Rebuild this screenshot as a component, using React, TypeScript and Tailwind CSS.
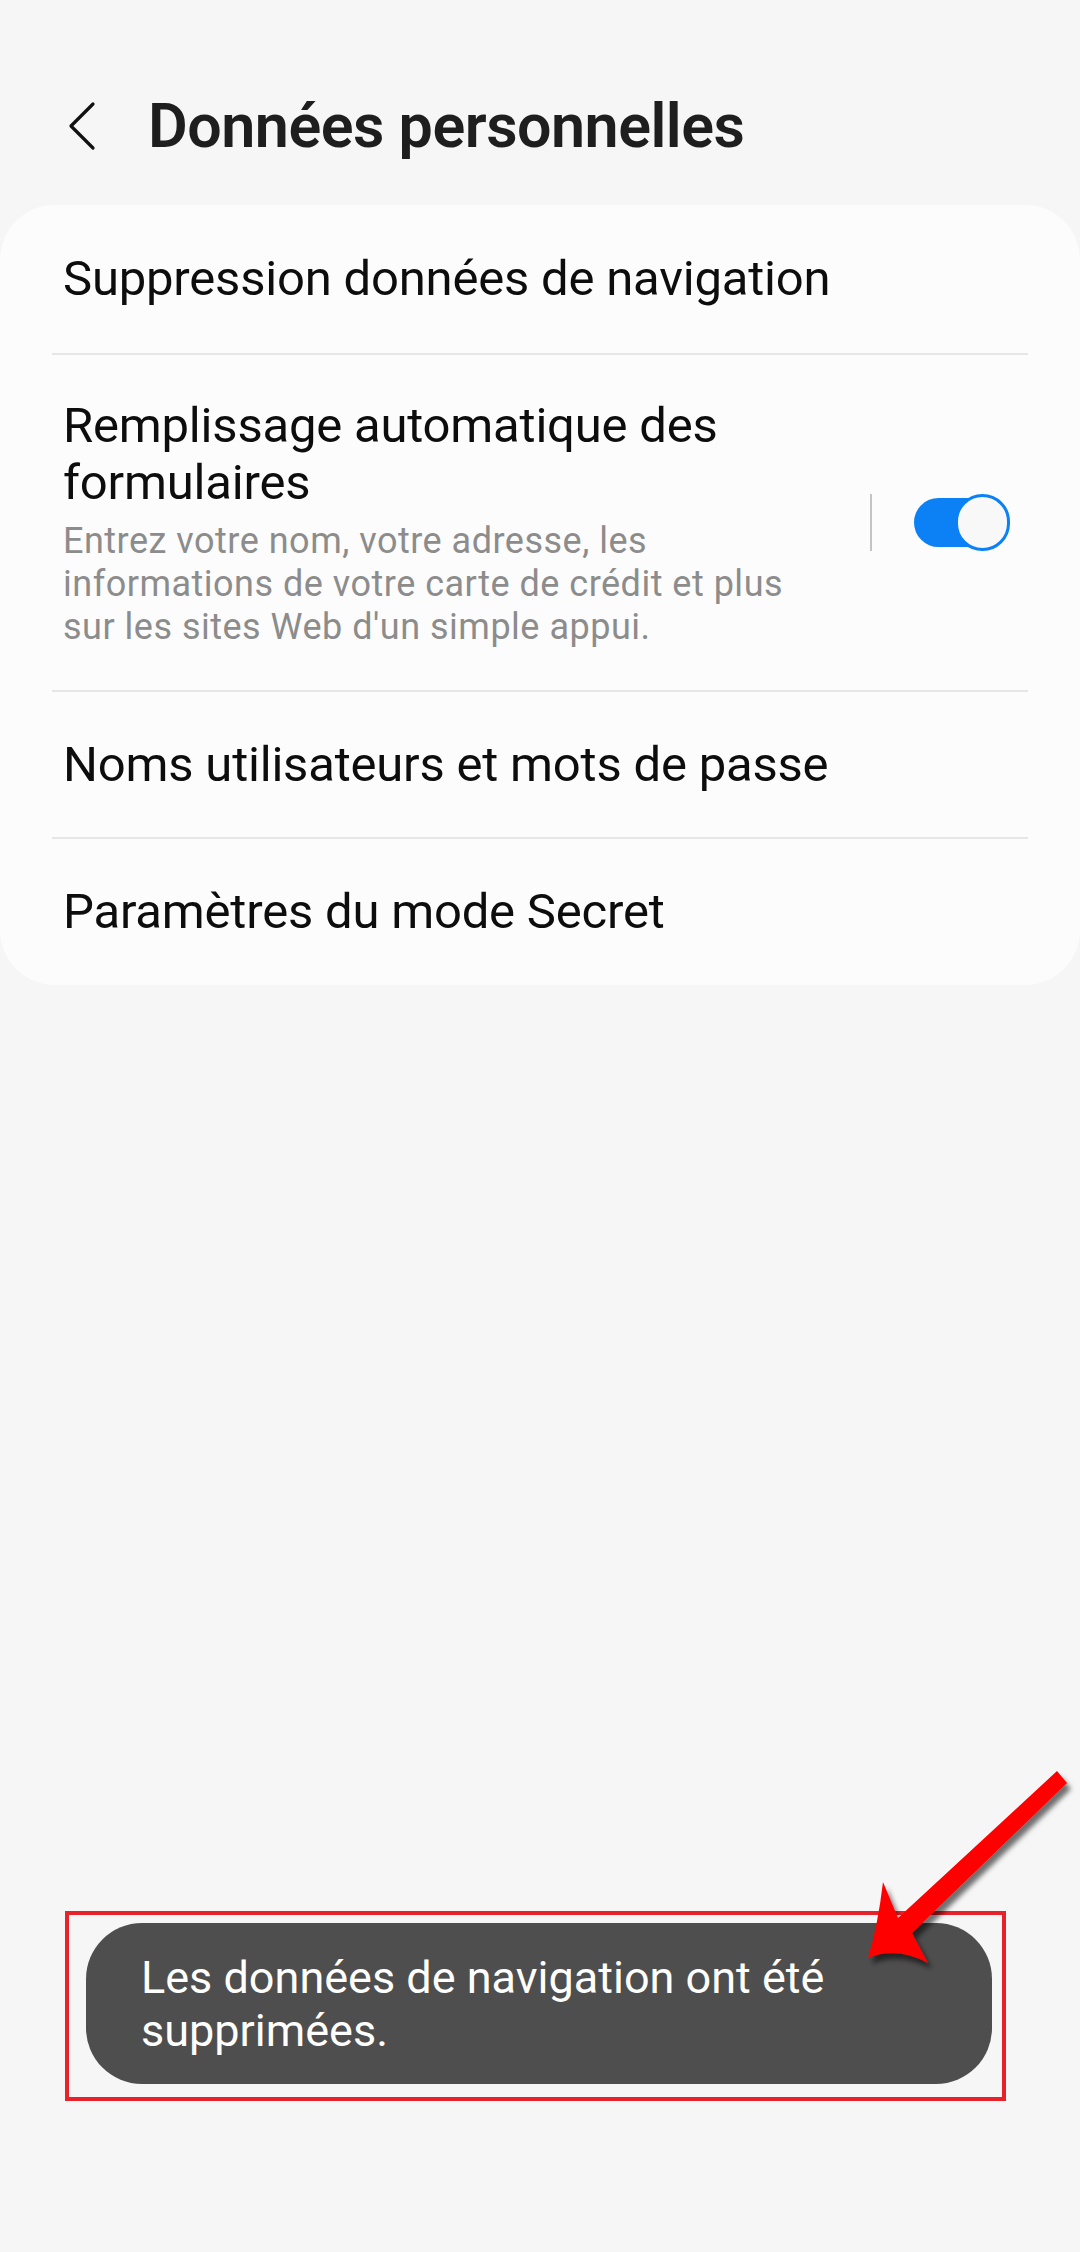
import React from "react";

function Divider() {
  return <div className="mx-[52px] h-[2px] bg-[#e6e6e6]" />;
}

function Toggle() {
  return (
    <div className="relative h-[57px] w-[96px]">
      <div className="absolute left-0 top-[4px] h-[49px] w-[90px] rounded-full bg-[#0b81f5]" />
      <div className="absolute right-0 top-0 h-[57px] w-[55px] rounded-full border-[3px] border-[#0b81f5] bg-[#f8f8f8]" />
    </div>
  );
}

function RedArrow() {
  return (
    <svg
      className="pointer-events-none absolute left-0 top-0"
      width="1080"
      height="2252"
      viewBox="0 0 1080 2252"
    >
      <defs>
        <filter id="arrowShadow" x="-20%" y="-20%" width="140%" height="140%">
          <feDropShadow dx="4" dy="6" stdDeviation="2.5" floodColor="#000" floodOpacity="0.55" />
        </filter>
      </defs>
      <path
        d="M1057 1771 L1067 1783 L912 1933 L928 1963 Q896 1946 868 1958 Q878 1925 883 1882 L898 1918 Z"
        fill="#ff0000"
        filter="url(#arrowShadow)"
      />
    </svg>
  );
}

export default function App() {
  return (
    <div className="relative h-[2252px] w-[1080px] overflow-hidden bg-[#f6f6f6] font-['Roboto',sans-serif]">
      {/* Header */}
      <header className="mt-[86px] flex h-[80px] items-center pl-[68px]">
        <svg width="28" height="50" viewBox="0 0 28 50" className="shrink-0">
          <polyline
            points="25,3 3,25 25,47"
            fill="none"
            stroke="#111"
            strokeWidth="3.2"
            strokeLinecap="round"
            strokeLinejoin="round"
          />
        </svg>
        <h1 className="ml-[52px] text-[61px] font-semibold leading-[80px] tracking-[-0.5px] text-[#1e1e1e]">
          Données personnelles
        </h1>
      </header>

      {/* Settings card */}
      <section className="mt-[39px] rounded-[55px] bg-[#fcfcfc] text-[#0d0d0d]">
        <div className="flex h-[148px] items-center pl-[63px] text-[49px] tracking-[-0.2px]">
          Suppression données de navigation
        </div>
        <Divider />
        <div className="flex h-[335px] items-center pl-[63px] pr-[70px]">
          <div className="flex-1">
            <div className="whitespace-nowrap text-[49px] leading-[57px] tracking-[-0.2px]">
              Remplissage automatique des
              <br />
              formulaires
            </div>
            <div className="mt-[9px] whitespace-nowrap text-[36px] leading-[43px] tracking-[0.5px] text-[#8c8c8c]">
              Entrez votre nom, votre adresse, les
              <br />
              informations de votre carte de crédit et plus
              <br />
              sur les sites Web d'un simple appui.
            </div>
          </div>
          <div className="mr-[42px] h-[57px] w-[2px] bg-[#c4c4c4]" />
          <Toggle />
        </div>
        <Divider />
        <div className="flex h-[145px] items-center pl-[63px] text-[49px] tracking-[-0.2px]">
          Noms utilisateurs et mots de passe
        </div>
        <Divider />
        <div className="flex h-[146px] items-center pl-[63px] text-[49px] tracking-[-0.2px]">
          Paramètres du mode Secret
        </div>
      </section>

      {/* Toast with annotation frame */}
      <div className="absolute left-[65px] top-[1911px] h-[190px] w-[941px] border-[4px] border-[#e8222b] pl-[17px] pt-[8px]">
        <div className="flex h-[161px] w-[906px] items-center rounded-[56px] bg-[#4e4e4e] pl-[55px] text-[45px] leading-[53px] text-white">
          <p>
            Les données de navigation ont été
            <br />
            supprimées.
          </p>
        </div>
      </div>

      <RedArrow />
    </div>
  );
}
